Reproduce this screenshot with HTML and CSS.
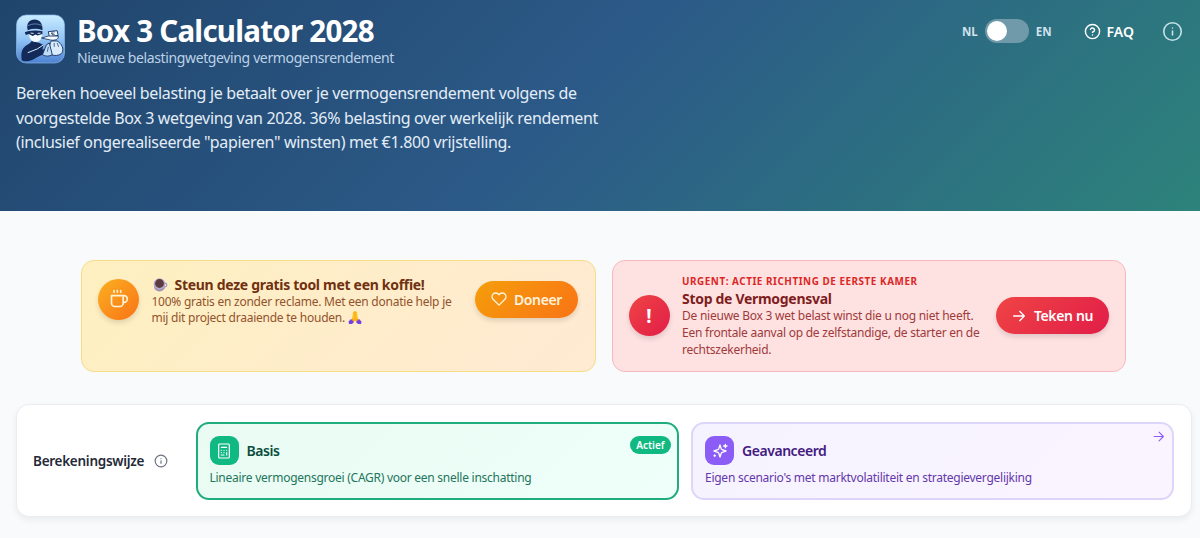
FILE: index.html
```html
<!DOCTYPE html>
<html lang="nl">
<head>
    <meta charset="utf-8">
    <title>Box 3 Calculator 2028</title>
    <meta name="viewport" content="width=device-width, initial-scale=1">
    <link rel="stylesheet" href="styles.css">
</head>
<body>

    <header class="header">
        <div class="header-top">
            <div class="brand">
                <svg class="logo" viewBox="0 0 50 50">
                    <defs>
                        <linearGradient id="sky" x1="0" y1="0" x2="0" y2="1">
                            <stop offset="0" stop-color="#c9ecff"/>
                            <stop offset=".5" stop-color="#92c4f5"/>
                            <stop offset="1" stop-color="#4d82d2"/>
                        </linearGradient>
                    </defs>
                    <rect x=".5" y=".5" width="49" height="49" rx="10" fill="url(#sky)" stroke="#8bb8e6" stroke-width=".7"/>
                    <!-- body and arm -->
                    <path d="M6 47c-1-6-1-11 4-15 3-2 5-3 6-5l8 2 4 2-1 5 3-1 1 4-10 5c-4 3-11 5-15 3z" fill="#122b59"/>
                    <path d="M12 39l10-4 6-4" fill="none" stroke="#d9eeff" stroke-width="1"/>
                    <!-- head -->
                    <path d="M13 18c0 6 3 10 7 10 5 0 7-5 7-10z" fill="#f2faff"/>
                    <path d="M12 16C10 9 14 5 19 5s8 4 8 9v2c-5-2-10-2-15 0z" fill="#122b59"/>
                    <path d="M12 11.500c5-2.500 10-2.500 15 0" fill="none" stroke="#7fa8d8" stroke-width=".7"/>
                    <path d="M9 18l3-1c5-1 10-1 15 0v3l-5 1.500-2-1-3 1.500-4-2-3 1z" fill="#122b59"/>
                    <path d="M15 19l3 .3M22 19.300l3-.3" stroke="#fff" stroke-width=".9"/>
                    <!-- loot -->
                    <path d="M33 17.500l9-1 1 5-9 1z" fill="#f2faff" stroke="#122b59" stroke-width=".9"/>
                    <path d="M39.500 18c-2-1-3.500 0-3 1.700.3 1 2 1.300 3 .5M36 19.500h2.500" fill="none" stroke="#122b59" stroke-width=".7"/>
                    <path d="M26 24l7-2 10 0c1 3-3 5-8 4z" fill="#f2faff" stroke="#122b59" stroke-width=".8"/>
                    <path d="M36 27h6c5 3 7 8 5 12-2 3-9 4-12 1-2-4-1-9 1-13z" fill="#d9ecfd" stroke="#122b59" stroke-width=".9"/>
                    <path d="M31 31l3-2 3 12c-3 2-7 2-10 0z" fill="#bddcfa" stroke="#122b59" stroke-width=".9"/>
                    <path d="M39 29v4M42 29l1.500 4M33 33l-1 5" fill="none" stroke="#122b59" stroke-width=".7"/>
                </svg>
                <div>
                    <h1 class="title">Box 3 Calculator 2028</h1>
                    <div class="subtitle">Nieuwe belastingwetgeving vermogensrendement</div>
                </div>
            </div>
            <nav class="nav">
                <div class="lang">
                    <span>NL</span>
                    <div class="switch"><div class="knob"></div></div>
                    <span>EN</span>
                </div>
                <div class="faq">
                    <svg class="icon" viewBox="0 0 24 24"><circle cx="12" cy="12" r="10"/><path d="M9.090 9a3 3 0 0 1 5.830 1c0 2-3 3-3 3M12 17h.01"/></svg>
                    <span>FAQ</span>
                </div>
                <svg class="icon info" viewBox="0 0 24 24"><circle cx="12" cy="12" r="10"/><path d="M12 16v-4.500M12 8h.01"/></svg>
            </nav>
        </div>
        <p class="intro">Bereken hoeveel belasting je betaalt over je vermogensrendement volgens de<br>
            voorgestelde Box 3 wetgeving van 2028. 36% belasting over werkelijk rendement<br>
            (inclusief ongerealiseerde "papieren" winsten) met €1.800 vrijstelling.</p>
    </header>

    <main>
        <div class="banners">
            <section class="banner donate">
                <div class="round orange">
                    <svg class="icon" viewBox="0 0 24 24"><path d="M17 8h1a4 4 0 1 1 0 8h-1M3 8h14v9a4 4 0 0 1-4 4H7a4 4 0 0 1-4-4zM6 2v2M10 2v2M14 2v2"/></svg>
                </div>
                <div class="banner-text">
                    <h2 class="koffie">
                        <svg class="emoji" viewBox="0 0 16 16">
                            <ellipse cx="7.500" cy="9.500" rx="5.500" ry="5" fill="#9d91b3"/>
                            <circle cx="13" cy="8" r="1.800" fill="none" stroke="#a99bb8" stroke-width="1.200"/>
                            <circle cx="7.500" cy="7" r="5.800" fill="#b5a5c6"/>
                            <circle cx="7.500" cy="6.500" r="4.400" fill="#5d3b42"/>
                        </svg>
                        <span>Steun deze gratis tool met een koffie!</span>
                    </h2>
                    <p>100% gratis en zonder reclame. Met een donatie help je<br>mij dit project draaiende te houden.
                        <svg class="pray" viewBox="0 0 14 13"><path d="M5 1q2-2 4 0l1 8-3 1-3-1z" fill="#ffc31f"/><path d="M7 1v8" stroke="#ef982b" stroke-width=".7"/><path d="M4 7l3 2-2 3-2-1z" fill="#f9a51c"/><path d="M10 7L7 9l2 3 2-1z" fill="#f9a51c"/><path d="M.5 10.500L3 8l3 3-2 2H1zM13.500 10.500L11 8l-3 3 2 2h3z" fill="#7440e2"/></svg></p>
                </div>
                <div class="btn btn-orange">
                    <svg class="icon" viewBox="0 0 24 24"><path d="M20.840 4.610a5.500 5.500 0 0 0-7.780 0L12 5.670l-1.060-1.060a5.500 5.500 0 0 0-7.780 7.780L12 21.230l8.840-8.840a5.500 5.500 0 0 0 0-7.780z"/></svg>
                    <span>Doneer</span>
                </div>
            </section>

            <section class="banner urgent">
                <div class="round red">!</div>
                <div class="banner-text">
                    <div class="tag">Urgent: actie richting de Eerste Kamer</div>
                    <h2 class="stop">Stop de Vermogensval</h2>
                    <p>De nieuwe Box 3 wet belast winst die u nog niet heeft.<br>Een frontale aanval op de zelfstandige, de starter en de<br>rechtszekerheid.</p>
                </div>
                <div class="btn btn-red">
                    <svg class="icon" viewBox="0 0 24 24"><path d="M4 12h16M13 5l7 7-7 7"/></svg>
                    <span>Teken nu</span>
                </div>
            </section>
        </div>

        <section class="modes">
            <div class="modes-label">
                <span>Berekeningswijze</span>
                <svg class="icon" viewBox="0 0 24 24"><circle cx="12" cy="12" r="10"/><path d="M12 16v-4.500M12 8h.01"/></svg>
            </div>
            <div class="mode basis">
                <div class="mode-head">
                    <div class="mode-icon">
                        <svg class="icon calc" viewBox="0 0 24 24"><rect x="4" y="1.500" width="16" height="21" rx="1.500"/><path d="M8 6.500h8M8 11h.01M12 11h.01M16 11h.01M8 14.500h.01M12 14.500h.01M16 14.500v3.500M8 18h4"/></svg>
                    </div>
                    <h3>Basis</h3>
                </div>
                <p>Lineaire vermogensgroei (CAGR) voor een snelle inschatting</p>
                <span class="badge">Actief</span>
            </div>
            <div class="mode advanced">
                <div class="mode-head">
                    <div class="mode-icon">
                        <svg class="icon" viewBox="0 0 24 24"><path d="M12 3l-1.900 5.800a2 2 0 0 1-1.300 1.300L3 12l5.800 1.900a2 2 0 0 1 1.300 1.300L12 21l1.900-5.800a2 2 0 0 1 1.300-1.300L21 12l-5.800-1.900a2 2 0 0 1-1.300-1.300zM20 2v5M17.500 4.500h5M4 18v2M3 19h2"/></svg>
                    </div>
                    <h3>Geavanceerd</h3>
                </div>
                <p>Eigen scenario's met marktvolatiliteit en strategievergelijking</p>
                <svg class="icon arrow" viewBox="0 0 24 24"><path d="M4 12h17M13 4l8 8-8 8"/></svg>
            </div>
        </section>
    </main>

</body>
</html>
```
FILE: styles.css
```css
*{
    box-sizing: border-box;
}

body{
    margin: 0;
    height: 538px;
    overflow: hidden;
    background-color: #f8fafc;
    font-family: "Segoe UI", "Noto Sans", "Open Sans", sans-serif;
    color: #1f2937;
    white-space: nowrap;
}

h1, h2, h3, p{
    margin: 0;
}

.icon{
    display: block;
    fill: none;
    stroke: currentColor;
    stroke-width: 2;
    stroke-linecap: round;
    stroke-linejoin: round;
    flex: none;
}

/* header */
.header{
    height: 210.500px;
    padding: 14px 17px 0 16px;
    background: linear-gradient(135deg, #20456c 0%, #2c5a88 48%, #2d837b 100%);
    color: white;
}

.header-top{
    display: flex;
    justify-content: space-between;
    height: 67px;
}

.brand{
    display: flex;
    gap: 12px;
}

.logo{
    width: 49px;
    height: 50px;
}

.title{
    font-size: 29.500px;
    line-height: 34px;
    letter-spacing: -0.750px;
}

.subtitle{
    font-size: 14px;
    line-height: 20px;
    letter-spacing: -0.370px;
    color: #bdd2e7;
}

.nav{
    display: flex;
    align-items: center;
    height: 34px;
}

.lang{
    display: flex;
    align-items: center;
    gap: 7px;
    font-size: 11.500px;
    font-weight: 700;
    color: #cfe2ec;
}

.switch{
    width: 44px;
    height: 24px;
    padding: 2px;
    border-radius: 12px;
    background-color: #7099a9;
}

.knob{
    width: 20px;
    height: 20px;
    border-radius: 50%;
    background-color: white;
}

.faq{
    display: flex;
    align-items: center;
    gap: 6px;
    margin: 0 28px 0 32px;
    font-size: 14px;
    font-weight: 600;
}

.faq .icon{
    width: 17px;
    height: 17px;
}

.info{
    width: 21px;
    height: 21px;
    stroke-width: 1.800;
    color: #c5e3e8;
}

.intro{
    font-size: 16px;
    line-height: 24.500px;
    letter-spacing: -0.330px;
    color: #e3edf7;
}

/* banners */
.banners{
    display: grid;
    grid-template-columns: 514.500px 514.500px;
    gap: 16px;
    margin: 49px 0 0 81px;
}

.banner{
    display: flex;
    height: 112.500px;
    padding: 0 16px;
    border: 1px solid #f6dd85;
    border-radius: 13px;
}

.donate{
    padding-top: 15px;
    align-items: flex-start;
    background: linear-gradient(135deg, #fef0c0, #ffead3);
}

.urgent{
    align-items: center;
    background: #fee2e2;
    border-color: #f7b9bf;
}

.round{
    display: flex;
    align-items: center;
    justify-content: center;
    flex: none;
    width: 41px;
    height: 41px;
    margin-right: 12.500px;
    border-radius: 50%;
    color: white;
    font-size: 19px;
    font-weight: 700;
    box-shadow: 0 3px 5px rgba(0, 0, 0, 0.12);
}

.round .icon{
    width: 20px;
    height: 20px;
}

.orange{
    margin-top: 3px;
    background: linear-gradient(135deg, #fbb021, #f97316);
    color: #fff3d6;
}

.red{
    background: linear-gradient(135deg, #ef4444, #e11d48);
}

.banner-text{
    flex: 1;
}

.banner h2{
    font-size: 14px;
    line-height: 18px;
    letter-spacing: -0.300px;
}

.banner p{
    font-size: 12px;
    line-height: 16.700px;
    letter-spacing: -0.240px;
}

.koffie{
    display: flex;
    align-items: center;
    gap: 7px;
    color: #713010;
}

.emoji{
    width: 16px;
    height: 16px;
}

.donate p{
    color: #92532c;
}

.pray{
    width: 14px;
    height: 13px;
    vertical-align: -2px;
}

.tag{
    font-size: 9.900px;
    line-height: 17px;
    font-weight: 700;
    letter-spacing: 0.550px;
    text-transform: uppercase;
    color: #dc2626;
}

.stop{
    color: #7f1d1d;
}

.urgent p{
    color: #a03a3a;
}

.btn{
    display: flex;
    align-items: center;
    justify-content: center;
    gap: 7px;
    height: 37px;
    margin-right: 0.500px;
    border-radius: 19px;
    color: white;
    font-size: 14px;
    font-weight: 600;
    letter-spacing: -0.350px;
    box-shadow: 0 3px 5px rgba(0, 0, 0, 0.12);
}

.btn .icon{
    width: 16px;
    height: 16px;
}

.btn-orange{
    width: 103px;
    margin-top: 5px;
    background: linear-gradient(135deg, #f59e0b, #f97316);
    color: #fff3dc;
}

.btn-red{
    width: 113px;
    background: linear-gradient(135deg, #ef4444, #e11d48);
}

/* calculation mode */
.modes{
    display: grid;
    grid-template-columns: 150px 483px 483px;
    column-gap: 12.500px;
    width: 1175.500px;
    height: 113px;
    margin: 32px 0 0 16px;
    padding: 17px 0 0 16px;
    border: 1px solid #e9ecf1;
    border-radius: 13px;
    background-color: white;
    box-shadow: 0 3px 6px rgba(0, 0, 0, 0.06);
}

.modes-label{
    display: flex;
    align-items: center;
    gap: 10px;
    height: 77px;
    font-size: 13.500px;
    font-weight: 600;
    letter-spacing: -0.270px;
}

.modes-label .icon{
    width: 14px;
    height: 14px;
    color: #6b7280;
}

.mode{
    position: relative;
    height: 78px;
    padding: 12px;
    border: 2px solid;
    border-radius: 13px;
}

.mode-head{
    display: flex;
    align-items: center;
    gap: 8px;
}

.mode-icon{
    display: flex;
    align-items: center;
    justify-content: center;
    width: 29px;
    height: 29px;
    border-radius: 9px;
    color: white;
}

.mode-icon .icon{
    width: 16px;
    height: 16px;
}

.mode-icon .calc{
    stroke-width: 1.800;
}

.mode h3{
    font-size: 14px;
    line-height: 20px;
    font-weight: 600;
    letter-spacing: -0.450px;
}

.mode p{
    margin-top: 4px;
    font-size: 12px;
    line-height: 17px;
    letter-spacing: -0.260px;
}

.basis{
    border-color: #20ad7d;
    background: linear-gradient(135deg, #e9fbf3, #effffa);
}

.basis .mode-icon{
    background-color: #10b981;
}

.basis h3{
    color: #084d3b;
}

.basis p{
    color: #23755b;
}

.advanced{
    border-color: #ddd6fa;
    background: linear-gradient(135deg, #f5f3ff, #faf4ff);
}

.advanced .mode-icon{
    background-color: #8b5cf6;
}

.advanced h3{
    color: #431a80;
}

.advanced p{
    color: #6437aa;
}

.badge{
    position: absolute;
    top: 12px;
    right: 6px;
    padding: 0 6px;
    border-radius: 9px;
    background-color: #10b981;
    color: white;
    font-size: 10px;
    line-height: 18px;
    font-weight: 600;
}

.arrow{
    position: absolute;
    top: 6px;
    right: 7px;
    width: 13px;
    height: 13px;
    color: #8b5cf6;
}
```
